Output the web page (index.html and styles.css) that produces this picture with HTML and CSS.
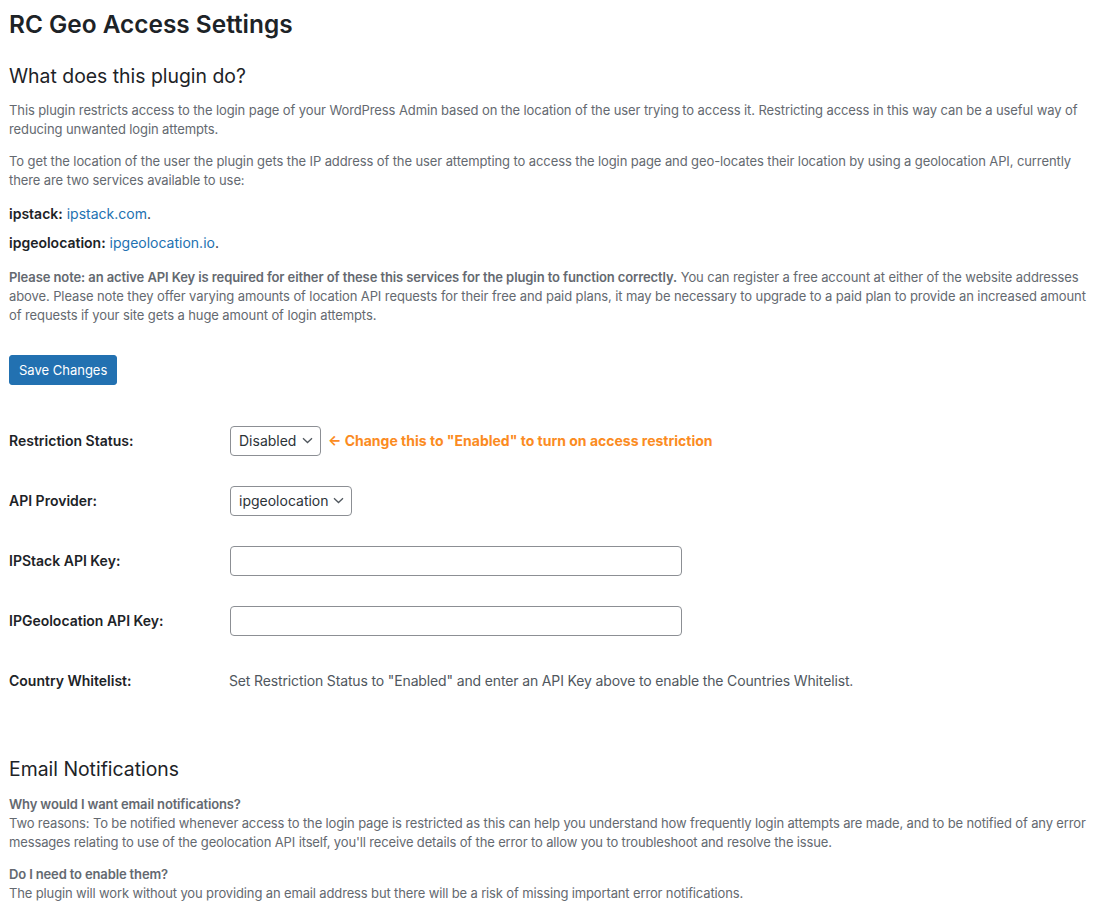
FILE: index.html
```html
<!DOCTYPE html>
<html lang="en">
<head>
<meta charset="utf-8">
<title>RC Geo Access Settings</title>
<link rel="stylesheet" href="styles.css">
</head>
<body>
<div class="wrap">
  <h1 class="title">RC Geo Access Settings</h1>
  <h2 class="section">What does this plugin do?</h2>
  <p class="desc p-first">This plugin restricts access to the login page of your WordPress Admin based on the location of the user trying to access it. Restricting access in this way can be a useful way of reducing unwanted login attempts.</p>
  <p class="desc">To get the location of the user the plugin gets the IP address of the user attempting to access the login page and geo-locates their location by using a geolocation API, currently there are two services available to use:</p>
  <p class="service s1"><strong>ipstack:</strong> <a href="#">ipstack.com</a>.</p>
  <p class="service s2"><strong>ipgeolocation:</strong> <a href="#">ipgeolocation.io</a>.</p>
  <p class="desc note"><strong>Please note: an active API Key is required for either of these this services for the plugin to function correctly.</strong> You can register a free account at either of the website addresses above. Please note they offer varying amounts of location API requests for their free and paid plans, it may be necessary to upgrade to a paid plan to provide an increased amount of requests if your site gets a huge amount of login attempts.</p>

  <button class="button-primary" type="button">Save Changes</button>

  <div class="form-table">
    <div class="row">
      <div class="label">Restriction Status:</div>
      <div class="field">
        <div class="select sel-status"><span>Disabled</span><svg width="11" height="7" viewBox="0 0 11 7"><path d="M1 1.2l4.5 4.3 4.5-4.3" fill="none" stroke="#50575e" stroke-width="1.3"/></svg></div>
        <span class="hint">&larr; Change this to "Enabled" to turn on access restriction</span>
      </div>
    </div>
    <div class="row">
      <div class="label">API Provider:</div>
      <div class="field">
        <div class="select sel-provider"><span>ipgeolocation</span><svg width="11" height="7" viewBox="0 0 11 7"><path d="M1 1.2l4.5 4.3 4.5-4.3" fill="none" stroke="#50575e" stroke-width="1.3"/></svg></div>
      </div>
    </div>
    <div class="row">
      <div class="label">IPStack API Key:</div>
      <div class="field"><input class="text-input" type="text"></div>
    </div>
    <div class="row">
      <div class="label">IPGeolocation API Key:</div>
      <div class="field"><input class="text-input" type="text"></div>
    </div>
    <div class="row">
      <div class="label">Country Whitelist:</div>
      <div class="field"><span class="info">Set Restriction Status to "Enabled" and enter an API Key above to enable the Countries Whitelist.</span></div>
    </div>
  </div>

  <h2 class="section email">Email Notifications</h2>
  <p class="desc faq faq-first"><strong>Why would I want email notifications?</strong><br>Two reasons: To be notified whenever access to the login page is restricted as this can help you understand how frequently login attempts are made, and to be notified of any error messages relating to use of the geolocation API itself, you'll receive details of the error to allow you to troubleshoot and resolve the issue.</p>
  <p class="desc faq"><strong>Do I need to enable them?</strong><br>The plugin will work without you providing an email address but there will be a risk of missing important error notifications.</p>
  <p class="desc faq"><strong>How do I enable them?</strong><br>Enter an email address below and save your changes.</p>
</div>
</body>
</html>
```

FILE: styles.css
```css
html, body {
  margin: 0;
  padding: 0;
  background: #ffffff;
}
body {
  font-family: Inter, "Noto Sans", sans-serif;
  color: #1d2327;
  overflow: hidden;
}
.wrap {
  padding: 9px 5px 0 9px;
}
.title {
  margin: 0;
  font-size: 24.4px;
  line-height: 31px;
  font-weight: 600;
  color: #1d2327;
}
.section {
  margin: 23px 0 0;
  font-size: 19.4px;
  line-height: 26px;
  font-weight: 400;
  color: #1d2327;
}
.desc {
  margin: 13px 0 0;
  font-size: 13px;
  line-height: 19px;
  color: #646970;
  letter-spacing: -0.1px;
}
.desc strong {
  font-weight: 600;
}
.p-first {
  margin-top: 11.5px;
}
.service {
  margin: 0;
  font-size: 14px;
  line-height: 20px;
  color: #1d2327;
}
.service strong {
  font-weight: 600;
}
.service a {
  color: #2271b1;
  text-decoration: none;
}
.s1 { margin-top: 14.5px; }
.s2 { margin-top: 9px; }
.note { margin-top: 14.5px; }
.button-primary {
  display: block;
  margin-top: 30.5px;
  height: 30px;
  padding: 0 9px;
  background: #2271b1;
  border: 1px solid #2271b1;
  border-radius: 3px;
  color: #ffffff;
  font-family: inherit;
  font-size: 13px;
  font-weight: 400;
}
.form-table {
  margin-top: 25.5px;
  display: flex;
  flex-direction: column;
}
.row {
  display: grid;
  grid-template-columns: 221px 1fr;
  align-items: center;
  height: 60px;
}
.label {
  font-size: 14px;
  font-weight: 600;
  color: #1d2327;
}
.field {
  display: flex;
  align-items: center;
  gap: 7px;
}
.select {
  box-sizing: border-box;
  height: 30px;
  display: inline-flex;
  align-items: center;
  justify-content: space-between;
  padding: 0 7px 0 8px;
  border: 1px solid #8c8f94;
  border-radius: 4px;
  font-size: 14px;
  color: #2c3338;
  background: #fff;
}
.sel-status { width: 91px; }
.sel-provider { width: 122px; }
.hint {
  color: #fb8b22;
  font-size: 14px;
  font-weight: 700;
}
.text-input {
  box-sizing: border-box;
  width: 452px;
  height: 30px;
  margin: 0;
  border: 1px solid #8c8f94;
  border-radius: 4px;
  background: #fff;
}
.info {
  margin-left: -1px;
  font-size: 14px;
  color: #50575e;
  letter-spacing: -0.14px;
}
.section.email {
  margin-top: 45px;
}
.faq {
  letter-spacing: -0.14px;
}
.faq-first {
  margin-top: 13.5px;
}
```
